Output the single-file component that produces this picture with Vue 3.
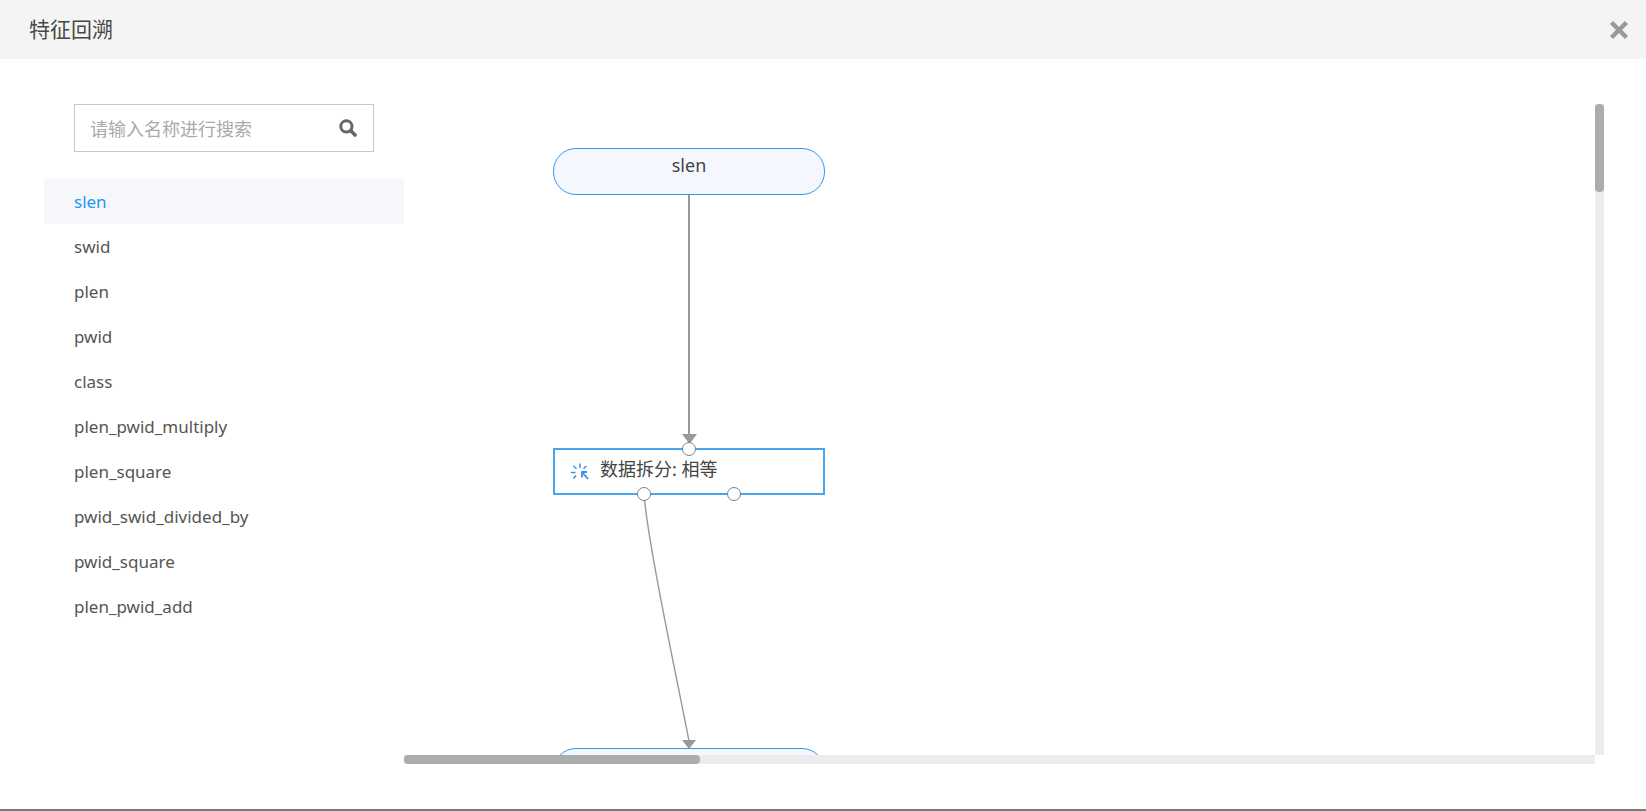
<script setup>
const features = [
  'slen',
  'swid',
  'plen',
  'pwid',
  'class',
  'plen_pwid_multiply',
  'plen_square',
  'pwid_swid_divided_by',
  'pwid_square',
  'plen_pwid_add'
]
const activeFeature = 'slen'
</script>

<template>
  <div class="page">
    <header class="modal-header">
      <span class="modal-title">特征回溯</span>
      <svg class="close-icon" width="20" height="20" viewBox="0 0 20 20">
        <path d="M2.5 2.5 L17.5 17.5 M17.5 2.5 L2.5 17.5" stroke="#999" stroke-width="4.4" fill="none" />
      </svg>
    </header>

    <div class="modal-body">
      <aside class="sidebar">
        <div class="search-box">
          <span class="search-placeholder">请输入名称进行搜索</span>
          <svg class="search-icon" width="18" height="18" viewBox="0 0 18 18">
            <circle cx="7.4" cy="7.4" r="5.6" stroke="#666" stroke-width="3" fill="none" />
            <path d="M11.6 11.6 L16 16" stroke="#666" stroke-width="3.6" stroke-linecap="round" />
          </svg>
        </div>
        <ul class="feature-list">
          <li
            v-for="name in features"
            :key="name"
            class="feature-item"
            :class="{ active: name === activeFeature }"
          >{{ name }}</li>
        </ul>
      </aside>

      <main class="graph-area">
        <div class="graph-view">
          <svg class="edges" width="1191" height="651" viewBox="0 0 1191 651">
            <path d="M285 91 L285 336" stroke="#999" stroke-width="2" fill="none" />
            <path d="M278 330 L293 330 L285.5 340 Z" fill="#999" />
            <path d="M240 390 C244 440 272 570 285 637" stroke="#999" stroke-width="1.4" fill="none" />
            <path d="M278 636 L292 636 L285 645 Z" fill="#999" />
          </svg>

          <div class="node node-input node-first">slen</div>

          <div class="node node-split">
            <svg class="split-icon" width="20" height="20" viewBox="0 0 20 20">
              <g stroke="#3f8cf5" stroke-width="1.5" fill="none">
                <path d="M10 1.5 L10 6" />
                <path d="M3.5 4 L6.5 6.8" />
                <path d="M16.5 4 L13.5 6.8" />
                <path d="M1 10.5 L5.5 10.5" />
                <path d="M6 13.5 L3.5 16.5" />
                <path d="M12 10 L18 17" stroke-width="1.8" />
                <path d="M12 15.5 L12 10 L17 10" stroke-width="1.8" />
              </g>
            </svg>
            <span>数据拆分: 相等</span>
            <i class="port port-top"></i>
            <i class="port port-left"></i>
            <i class="port port-right"></i>
          </div>

          <div class="node node-input node-last"></div>
        </div>

        <div class="scroll-track scroll-y"><div class="scroll-thumb thumb-y"></div></div>
        <div class="scroll-track scroll-x"><div class="scroll-thumb thumb-x"></div></div>
      </main>
    </div>

    <div class="bottom-line"></div>
  </div>
</template>

<style scoped>
.page {
  height: 811px;
  display: flex;
  flex-direction: column;
  overflow: hidden;
  background: #fff;
  color: #444;
  font-family: "Noto Sans", "Noto Sans CJK SC", sans-serif;
}

.modal-header {
  height: 59px;
  flex: none;
  display: flex;
  align-items: center;
  justify-content: space-between;
  padding: 0 17px 0 29px;
  background: #f4f4f4;
}

.modal-title {
  font-size: 21px;
  line-height: 28px;
  margin-top: -2px;
  color: #484848;
}

.modal-body {
  flex: 1;
  display: flex;
  min-height: 0;
}

.sidebar {
  width: 360px;
  margin-left: 44px;
  padding-top: 45px;
  flex: none;
}

.search-box {
  width: 300px;
  height: 48px;
  box-sizing: border-box;
  margin-left: 30px;
  padding: 0 16px 0 15px;
  display: flex;
  align-items: center;
  justify-content: space-between;
  border: 1px solid #c8c8c8;
}

.search-placeholder {
  font-size: 18px;
  color: #aaa;
}

.feature-list {
  list-style: none;
  margin: 27px 0 0;
  padding: 0;
}

.feature-item {
  height: 45px;
  line-height: 46px;
  padding-left: 30px;
  font-size: 17px;
  color: #555;
}

.feature-item.active {
  color: #2196f3;
  background: #f6f7fb;
}

.graph-area {
  position: relative;
  flex: 1;
  margin-top: 45px;
  margin-bottom: 45px;
  margin-right: 42px;
}

.graph-view {
  position: absolute;
  left: 0;
  top: 0;
  width: 1191px;
  height: 651px;
  overflow: hidden;
}

.edges {
  position: absolute;
  left: 0;
  top: 0;
}

.node {
  position: absolute;
  left: 149px;
  width: 272px;
  box-sizing: border-box;
  font-size: 18px;
  color: #444;
}

.node-input {
  height: 47px;
  border: 1.5px solid #2f98f0;
  border-radius: 23px;
  background: #f4f8fe;
  text-align: center;
}

.node-first {
  top: 44px;
  line-height: 33px;
}

.node-last {
  top: 644px;
}

.node-split {
  top: 344px;
  height: 47px;
  display: flex;
  align-items: center;
  padding: 0 0 8px 15px;
  gap: 10px;
  border: 2px solid #47a4ee;
  background: #fff;
}

.split-icon {
  margin-top: 9px;
}

.port {
  position: absolute;
  width: 14px;
  height: 14px;
  box-sizing: border-box;
  border: 1.6px solid #77818d;
  border-radius: 50%;
  background: #fff;
}

.port-top {
  top: -8px;
  left: 127px;
}

.port-left {
  bottom: -8px;
  left: 82px;
}

.port-right {
  bottom: -8px;
  left: 172px;
}

.scroll-track {
  position: absolute;
  background: #ececec;
}

.scroll-thumb {
  background: #acacac;
  border-radius: 4px;
}

.scroll-y {
  left: 1191px;
  top: 0;
  width: 9px;
  height: 651px;
}

.thumb-y {
  width: 9px;
  height: 88px;
}

.scroll-x {
  left: 0;
  top: 651px;
  width: 1191px;
  height: 9px;
}

.thumb-x {
  width: 296px;
  height: 9px;
}

.bottom-line {
  height: 2px;
  flex: none;
  background: #7a7a7a;
}
</style>

<style>
html,
body {
  margin: 0;
  background: #fff;
}
</style>
